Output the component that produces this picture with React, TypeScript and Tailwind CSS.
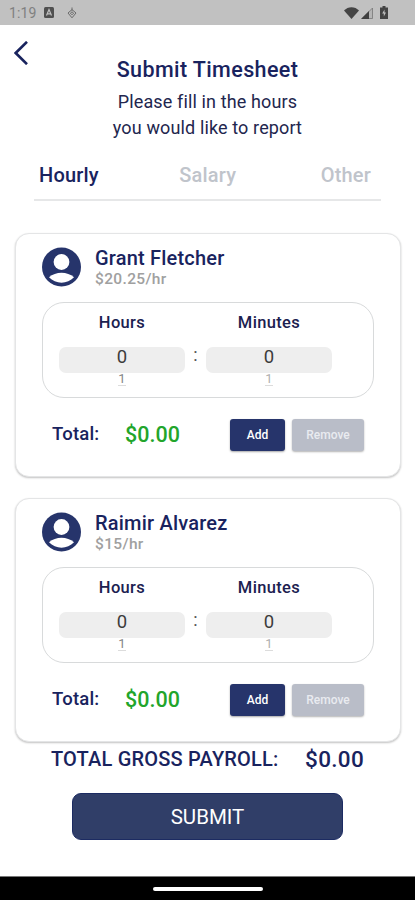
const tabs = [
  { label: "Hourly", className: "text-[#19235e]" },
  { label: "Salary", className: "text-[#c0c4cb]" },
  { label: "Other", className: "text-[#c0c4cb]" },
];

const employees = [
  { name: "Grant Fletcher", rate: "$20.25/hr", total: "$0.00" },
  { name: "Raimir Alvarez", rate: "$15/hr", total: "$0.00" },
];

function StatusBar() {
  return (
    <div className="flex h-[25px] shrink-0 items-center bg-[#c1c1c1] pl-[9px] pr-[27px] text-[#4a4a4a]">
      <span className="w-[35px] text-[14px] leading-none tracking-[0.1px] text-[#808080]">1:19</span>
      <svg className="h-[11px] w-[10px]" viewBox="0 0 10 11">
        <rect width="10" height="11" rx="1.5" fill="#505050" />
        <path d="M2.5 8.5 5 2.5 7.5 8.5M3.5 6.8h3" fill="none" stroke="#c1c1c1" strokeWidth="1.2" />
      </svg>
      <svg className="ml-[13px] h-3 w-[10px]" viewBox="0 0 10 12" fill="none" stroke="#6a6a6a">
        <path d="M5 .5v3M1 6 5 2.6 9 6 5 10.8Z" />
        <path d="M3.4 6.2 5 4.8 6.6 6.2 5 7.8Z" />
      </svg>
      <div className="ml-auto flex items-center">
        <svg className="h-3 w-[15px]" viewBox="0 0 15 12" fill="#444">
          <path d="M0 3.6C4-1 11-1 15 3.6L7.5 12Z" />
        </svg>
        <svg className="ml-[2px] h-3 w-3" viewBox="0 0 12 12">
          <path d="M11.5 1v10.5H1Z" fill="#b5b5b5" stroke="#777" strokeWidth=".8" />
          <path d="M8 4v8H0Z" fill="#3f3f3f" />
        </svg>
        <svg className="ml-[7px] h-[13px] w-2" viewBox="0 0 8 13">
          <path d="M2.5 0h3v1.5H8V13H0V1.5h2.5Z" fill="#444" />
          <path d="M4.5 3.5 2.2 7.5h1.6v3L6 6.5H4.5Z" fill="#c1c1c1" />
        </svg>
      </div>
    </div>
  );
}

function Avatar() {
  return (
    <svg className="h-10 w-10 shrink-0" viewBox="0 0 40 40">
      <circle cx="19.5" cy="20" r="19.5" fill="#26346b" />
      <circle cx="19.5" cy="15" r="7.9" fill="#fff" />
      <path d="M7 30.3C13.5 24.2 25.5 24.2 32 30.3 25.5 37.5 13.5 37.5 7 30.3Z" fill="#fff" />
    </svg>
  );
}

function Picker({ label, nextClassName }: { label: string; nextClassName: string }) {
  return (
    <div className="flex w-[126px] flex-col items-center">
      <div className="h-11 pt-[10px] text-[16.5px] leading-5 font-medium tracking-[0.35px] text-[#1c2150]">{label}</div>
      <div className="h-[26px] w-full rounded-[7px] bg-[#eeeeee] text-center text-[18.5px] leading-[21px] text-[#3c3c3c]">0</div>
      <div className={`text-[13px] leading-[12px] ${nextClassName}`}>1</div>
      <div className="h-px w-2 bg-[#dcdcdc]" />
    </div>
  );
}

function EmployeeCard({ name, rate, total }: { name: string; rate: string; total: string }) {
  return (
    <div className="h-[244px] rounded-[14px] border border-[#e4e5e6] bg-white px-[26px] pt-[13px] shadow-[0_1px_2px_rgba(0,0,0,0.24)]">
      <div className="flex h-[55px]">
        <Avatar />
        <div className="-mt-px pl-[13px]">
          <div className="text-[20px] leading-6 font-medium tracking-[0.2px] text-[#19235e]">{name}</div>
          <div className="text-[15.5px] leading-[18px] font-medium tracking-[0.35px] text-[#a0a0a0]">{rate}</div>
        </div>
      </div>
      <div className="flex h-[96px] w-[332px] rounded-[22px] border border-[#d8dadb] pl-[16px]">
        <Picker label="Hours" nextClassName="text-[#858585]" />
        <div className="w-[21px] pt-[41px] text-center text-[18px] leading-[22px] text-[#555]">:</div>
        <Picker label="Minutes" nextClassName="text-[#b0b0b0]" />
      </div>
      <div className="flex h-[74px] items-center pl-[10px]">
        <span className="w-[73px] pb-px text-[18.5px] font-medium tracking-[0.2px] text-[#19235e]">Total:</span>
        <span className="w-[105px] text-[21.5px] font-medium text-[#22a52b]">{total}</span>
        <button className="h-8 w-[55px] rounded-[3px] bg-[#26346b] text-[12px] font-medium text-white shadow-[0_1px_2px_rgba(0,0,0,0.35)]">Add</button>
        <button className="ml-[7px] h-8 w-[72px] rounded-[3px] bg-[#b9bdc8] text-[12px] font-medium text-[#e9ebf0] shadow-[0_1px_2px_rgba(0,0,0,0.3)]">Remove</button>
      </div>
    </div>
  );
}

export default function App() {
  return (
    <div className="flex h-[900px] w-[415px] flex-col overflow-hidden bg-white font-[Roboto,sans-serif]">
      <StatusBar />
      <header className="flex h-[124px] pl-[14px]">
        <svg className="mt-4 h-6 w-[14px] shrink-0" viewBox="0 0 14 24" fill="none" stroke="#19235e" strokeWidth="2.6">
          <path d="M13 .8 1.7 12 13 23.2" />
        </svg>
        <div className="flex-1 pr-7 pt-[31px] text-center">
          <h1 className="text-[21.5px] leading-7 font-medium tracking-[0.4px] text-[#19235e]">Submit Timesheet</h1>
          <p className="pt-[5px] text-[18px] leading-[26px] tracking-[0.13px] text-[#22264e]">
            Please fill in the hours
            <br />
            you would like to report
          </p>
        </div>
      </header>
      <nav className="mx-[34px] flex h-[52px] justify-between border-b-2 border-[#e6e7e8] pr-[10px] pl-[5px] pt-[14px] text-[20px] leading-6 font-medium tracking-[0.2px]">
        {tabs.map((tab) => (
          <span key={tab.label} className={`first:mr-[-4px] ${tab.className}`}>{tab.label}</span>
        ))}
      </nav>
      <main className="flex flex-col gap-[21px] pt-8 pr-[14px] pl-[15px]">
        {employees.map((employee) => (
          <EmployeeCard key={employee.name} {...employee} />
        ))}
      </main>
      <div className="flex h-[51px] justify-between pr-[51px] pl-[51px] pt-[3px] font-medium text-[#19235e]">
        <span className="text-[20px] leading-7 tracking-[0.2px]">TOTAL GROSS PAYROLL:</span>
        <span className="text-[22.5px] leading-7 tracking-[0.3px]">$0.00</span>
      </div>
      <button className="mx-auto h-[47px] w-[271px] shrink-0 rounded-[9px] border border-[#1c2b62] bg-[#303e68] pt-px text-[20.5px] text-white">SUBMIT</button>
      <div className="mt-auto flex h-6 shrink-0 items-center justify-center border-t border-[#777] bg-black">
        <div className="h-1 w-[110px] rounded-full bg-white" />
      </div>
    </div>
  );
}
